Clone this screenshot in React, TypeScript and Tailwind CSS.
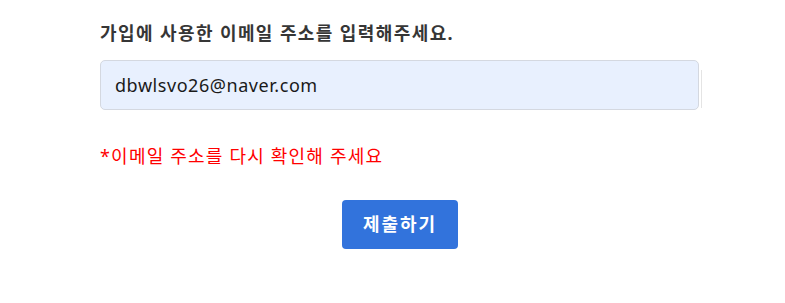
export default function App() {
  return (
    <div
      className="w-[785px] h-[303px] bg-white pl-[100px] pt-[20px]"
      style={{ fontFamily: '"Noto Sans", "Noto Sans CJK KR", sans-serif' }}
    >
      <div className="w-[600px] flex flex-col">
        <h2 className="text-[18px] font-bold text-[#363636] leading-[26px] tracking-[1.4px]">
          가입에 사용한 이메일 주소를 입력해주세요.
        </h2>
        <div className="relative mt-[14px]">
          <div className="h-[50px] w-[599px] rounded-[5px] border border-[#d4d8e0] bg-[#e8f0fe] flex items-center pl-[14px] text-[18px] text-[#1a1a1a] tracking-[0.55px]">
            dbwlsvo26@naver.com
          </div>
          <div className="absolute left-[601px] top-[10px] h-[38px] w-px bg-[#e4e4e4]" />
        </div>
        <p className="mt-[33px] text-[18px] text-[#ff0000] leading-[26px] tracking-[1.2px]">
          *이메일 주소를 다시 확인해 주세요
        </p>
        <div className="flex justify-center mt-[31px]">
          <button className="h-[49px] w-[116px] rounded-[4px] bg-[#3273dc] text-white text-[18px] font-semibold tracking-[2px]">
            제출하기
          </button>
        </div>
      </div>
    </div>
  );
}
